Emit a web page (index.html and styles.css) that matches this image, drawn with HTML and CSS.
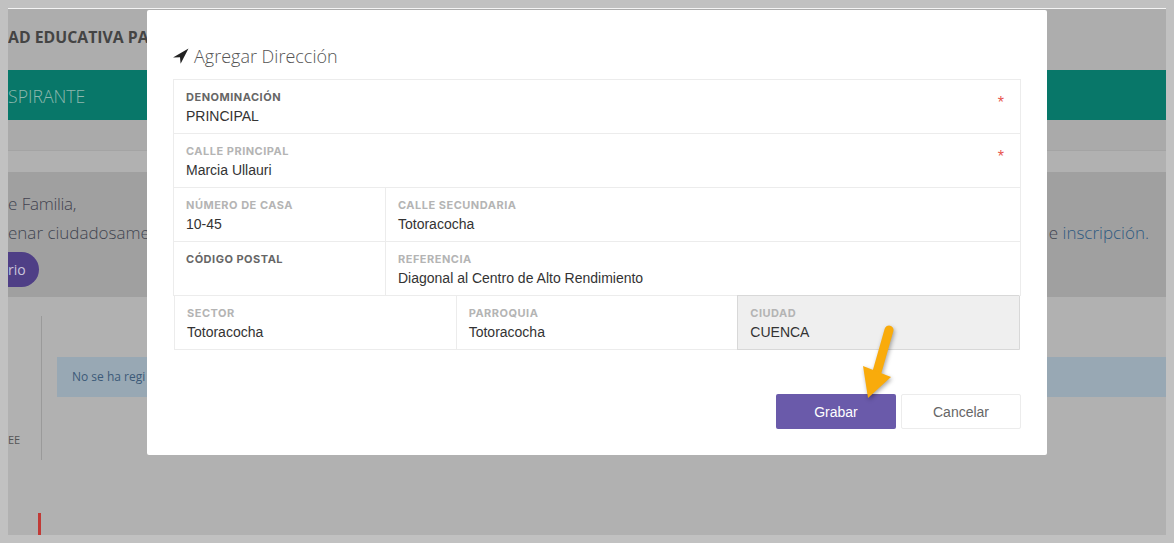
FILE: index.html
```html
<!DOCTYPE html>
<html lang="es">
<head>
<meta charset="utf-8">
<title>Agregar Dirección</title>
<link rel="stylesheet" href="styles.css">
</head>
<body>
<div class="app">
  <header class="top">AD EDUCATIVA PA</header>
  <div class="bar">SPIRANTE</div>
  <div class="sub"></div>
  <section class="notice">
    <p class="line">e <span class="fam">Familia,</span></p>
    <p class="line split"><span>enar ciudadosame</span><span>e <span class="link">inscripción.</span></span></p>
    <span class="pill">rio</span>
  </section>
  <div class="lower">
    <aside class="side">EE</aside>
    <div class="alert">No se ha regi</div>
  </div>
  <div class="redmark"></div>

  <div class="modal">
    <h2 class="title">
      <svg class="nav" viewBox="0 0 16 16"><path d="M15.5.5 0 9.6l7-.3.6 6.5z"/></svg>
      Agregar Dirección
    </h2>
    <div class="form">
      <div class="row">
        <div class="cell grow"><label class="dark">Denominación</label><div class="val">PRINCIPAL</div><span class="req">*</span></div>
      </div>
      <div class="row">
        <div class="cell grow"><label>Calle Principal</label><div class="val">Marcia Ullauri</div><span class="req">*</span></div>
      </div>
      <div class="row">
        <div class="cell first"><label>Número de casa</label><div class="val">10-45</div></div>
        <div class="cell grow"><label>Calle secundaria</label><div class="val">Totoracocha</div></div>
      </div>
      <div class="row">
        <div class="cell first"><label class="dark">Código postal</label></div>
        <div class="cell grow"><label>Referencia</label><div class="val">Diagonal al Centro de Alto Rendimiento</div></div>
      </div>
      <div class="row thirds">
        <div class="cell"><label>Sector</label><div class="val">Totoracocha</div></div>
        <div class="cell"><label>Parroquia</label><div class="val">Totoracocha</div></div>
        <div class="cell off"><label>Ciudad</label><div class="val">CUENCA</div></div>
      </div>
    </div>
    <div class="actions">
      <button class="btn save">Grabar</button>
      <button class="btn cancel">Cancelar</button>
    </div>
  </div>

  <svg class="arrow" viewBox="0 0 40 80" width="40" height="80">
    <path d="M29 5 17 47" fill="none" stroke="#f9ab0b" stroke-width="9" stroke-linecap="round"/>
    <path d="M3 41 31 52 8 73z" fill="#f9ab0b"/>
  </svg>
</div>
</body>
</html>
```
FILE: styles.css
```css
* { box-sizing: border-box; }
html, body { margin: 0; height: 100%; }
body {
  background: #c1c1c1;
  padding: 8px 8px 0;
  overflow: hidden;
  font-family: "Liberation Sans", Arial, sans-serif;
}
.app {
  position: relative;
  height: 527px;
  background: #b1b1b1;
  border-top: 1px solid #f4f4f4;
  overflow: hidden;
}
.top {
  height: 61px;
  padding-top: 18px;
  font: 700 15.8px/20px "Open Sans", sans-serif;
  color: #444;
  background: #adadad;
  white-space: nowrap;
}
.bar {
  height: 50px;
  background: #087769;
  color: #8fb8ae;
  font: 300 17.7px/52px "Open Sans", sans-serif;
}
.sub {
  height: 52px;
  background: #aeaeae linear-gradient(#aaa 0, #aaa 30px, #a4a4a4 30px, #a4a4a4 31px, #b1b1b1 31px);
}
.notice {
  height: 125px;
  padding-top: 18px;
  background: #a0a0a0;
  color: #404550;
  font: 300 17px/28px "Open Sans", sans-serif;
}
.line { margin: 0; padding-right: 17px; }
.split { display: flex; justify-content: space-between; margin-top: 1px; }
.fam { color: #43424f; letter-spacing: -.3px; }
.link { color: #2f5a80; }
.pill {
  display: block;
  width: 31px;
  height: 35px;
  margin-top: 5px;
  background: #4f3f86;
  border-radius: 0 18px 18px 0;
  color: #c9c5dc;
  font: 400 14px/35px "Open Sans", sans-serif;
}
.lower {
  display: flex;
  align-items: flex-start;
  padding-top: 19px;
}
.side {
  width: 34px;
  height: 144px;
  padding-top: 115px;
  border-right: 1px solid #9a9a9a;
  color: #555;
  font: 400 11px/18px "Open Sans", sans-serif;
}
.alert {
  flex: 1;
  height: 40px;
  margin: 41px 0 0 15px;
  padding-left: 15px;
  background: #98a8b4;
  color: #3c5a78;
  font: 400 12px/40px "Open Sans", sans-serif;
}
.redmark {
  width: 3px;
  height: 22px;
  margin: 53px 0 0 30px;
  background: #c13a36;
}
.modal {
  position: absolute;
  left: 139px;
  top: 1px;
  width: 900px;
  height: 445px;
  padding: 33px 26px 0;
  background: #fff;
  border-radius: 2px;
}
.title {
  display: flex;
  align-items: center;
  gap: 5px;
  height: 36px;
  margin: 0;
  padding-bottom: 10px;
  color: #555;
  font: 300 18px/28px "Open Sans", sans-serif;
}
.nav { width: 16px; height: 16px; fill: #222; }
.form { display: flex; flex-direction: column; }
.row {
  display: flex;
  height: 54px;
  border: 1px solid #ececec;
  border-top: 0;
}
.row:first-child { height: 55px; border-top: 1px solid #ececec; }
.thirds { margin: 0 1px; border-right-color: #d8d8d8; }
.thirds .cell { flex: 1 1 0; }
.cell {
  position: relative;
  padding: 10px 12px 0;
  border-left: 1px solid #ececec;
}
.cell:first-child { border-left: 0; }
.first { width: 211px; }
.grow { flex: 1; }
.off { background: #efefef; border: 1px solid #d8d8d8; border-right: 0; margin: -1px 0; }
label {
  display: block;
  color: #b4b4b4;
  font: 700 11px/14px "Inter", sans-serif;
  letter-spacing: .5px;
  text-transform: uppercase;
}
label.dark { color: #666; }
.val {
  margin-top: 4px;
  color: #333;
  font-size: 14px;
  line-height: 17px;
}
.req {
  position: absolute;
  right: 16px;
  top: 14px;
  color: #e8574f;
  font-size: 16px;
  line-height: 18px;
}
.actions {
  display: flex;
  justify-content: flex-end;
  gap: 5px;
  margin-top: 44px;
}
.btn {
  width: 120px;
  height: 35px;
  border-radius: 2px;
  font: 400 14px "Liberation Sans", sans-serif;
}
.save { background: #6a5aaa; border: 0; color: #fff; }
.cancel { background: #fff; border: 1px solid #ececec; color: #666; }
.arrow {
  position: absolute;
  left: 852px;
  top: 316px;
  filter: drop-shadow(1px 2px 2px rgba(0,0,0,.35));
}
```
